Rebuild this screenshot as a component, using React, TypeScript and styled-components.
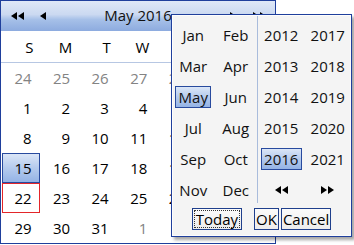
import React from "react";
import styled, { createGlobalStyle } from "styled-components";

const GlobalStyle = createGlobalStyle`
  html, body {
    margin: 0;
    padding: 0;
    background: #fff;
  }
  body {
    font-family: "Open Sans", "Noto Sans", sans-serif;
    font-size: 15px;
    color: #000;
  }
`;

const DAY_NAMES = ["S", "M", "T", "W", "T", "F", "S"];

type Day = { n: number; other?: boolean; selected?: boolean; today?: boolean };

const buildDays = (): Day[] => {
  const days: Day[] = [];
  [24, 25, 26, 27, 28, 29, 30].forEach((n) => days.push({ n, other: true }));
  for (let n = 1; n <= 31; n++) {
    days.push({ n, selected: n === 15, today: n === 22 });
  }
  for (let n = 1; n <= 4; n++) days.push({ n, other: true });
  return days;
};

const MONTHS = ["Jan", "Feb", "Mar", "Apr", "May", "Jun", "Jul", "Aug", "Sep", "Oct", "Nov", "Dec"];
const YEARS_LEFT = [2012, 2013, 2014, 2015, 2016];
const YEARS_RIGHT = [2017, 2018, 2019, 2020, 2021];

const Arrow = ({ dir, double }: { dir: "left" | "right"; double?: boolean }) => {
  const w = double ? 13 : 6;
  const tri = (x: number) =>
    dir === "left" ? `${x + 6},0 ${x + 6},8 ${x},4` : `${x},0 ${x},8 ${x + 6},4`;
  return (
    <svg width={w} height={8} viewBox={`0 0 ${w} 8`}>
      <polygon points={tri(0)} fill="#000" />
      {double && <polygon points={tri(7)} fill="#000" />}
    </svg>
  );
};

export default function App() {
  const days = buildDays();
  return (
    <>
      <GlobalStyle />
      <Stage>
        <Calendar>
          <Header>
            <NavButton>
              <Arrow dir="left" double />
            </NavButton>
            <NavButton $gap>
              <Arrow dir="left" />
            </NavButton>
            <Title>May 2016</Title>
            <NavButton>
              <Arrow dir="right" />
            </NavButton>
            <NavButton $gap>
              <Arrow dir="right" double />
            </NavButton>
          </Header>
          <DayNames>
            {DAY_NAMES.map((d, i) => (
              <DayName key={i}>{d}</DayName>
            ))}
          </DayNames>
          <DayGrid>
            {days.slice(0, 42).map((d, i) => (
              <DayCell key={i} $other={d.other} $selected={d.selected} $today={d.today}>
                {d.n}
              </DayCell>
            ))}
          </DayGrid>
        </Calendar>

        <Popup>
          <Panels>
            <PickGrid $width={85}>
              {MONTHS.map((m) => (
                <PickCell key={m}>
                  <PickItem $selected={m === "May"} $w={36}>
                    {m}
                  </PickItem>
                </PickCell>
              ))}
            </PickGrid>
            <Divider />
            <PickGrid $width={93}>
              {YEARS_LEFT.map((y, i) => (
                <React.Fragment key={y}>
                  <PickCell>
                    <PickItem $selected={y === 2016} $w={41}>
                      {y}
                    </PickItem>
                  </PickCell>
                  <PickCell>
                    <PickItem $w={41}>{YEARS_RIGHT[i]}</PickItem>
                  </PickCell>
                </React.Fragment>
              ))}
              <PickCell>
                <Arrow dir="left" double />
              </PickCell>
              <PickCell>
                <Arrow dir="right" double />
              </PickCell>
            </PickGrid>
          </Panels>
          <Footer>
            <FooterButton $after={12}>
              <FocusRect>Today</FocusRect>
            </FooterButton>
            <FooterButton $after={2}>OK</FooterButton>
            <FooterButton>Cancel</FooterButton>
          </Footer>
        </Popup>
      </Stage>
    </>
  );
}

const Stage = styled.div`
  position: relative;
  width: 354px;
  height: 245px;
  overflow: hidden;
`;

const Calendar = styled.div`
  width: 276px;
  height: 244px;
  box-sizing: border-box;
  border: 1px solid #1f3f9c;
  background: #fff;
  display: flex;
  flex-direction: column;
`;

const Header = styled.div`
  height: 30px;
  display: flex;
  align-items: center;
  padding: 0 8px;
  background: linear-gradient(
    to bottom,
    #dfe8f7 0%,
    #cbd9f1 45%,
    #a6c0e8 62%,
    #8dabdf 100%
  );
  border-bottom: 1px solid #fff;
`;

const NavButton = styled.div<{ $gap?: boolean }>`
  width: 16px;
  height: 16px;
  display: flex;
  align-items: center;
  justify-content: center;
  margin-left: ${(p) => (p.$gap ? "10px" : "0")};
  margin-right: ${(p) => (p.$gap ? "0" : "0")};
  &:nth-child(2) {
    margin-left: 10px;
  }
  &:nth-child(4) {
    margin-left: 0;
    margin-right: 10px;
  }
  &:nth-child(5) {
    margin-left: 0;
  }
`;

const Title = styled.div`
  flex: 1;
  text-align: center;
  font-size: 15px;
  line-height: 20px;
  color: #111;
  padding-bottom: 2px;
`;

const DayNames = styled.div`
  height: 30px;
  display: grid;
  grid-template-columns: repeat(7, 1fr);
  padding: 0 2px;
  align-items: center;
  border-bottom: 1px solid #b7c7e3;
`;

const DayName = styled.div`
  text-align: right;
  padding-right: 8px;
`;

const DayGrid = styled.div`
  flex: 1;
  display: grid;
  grid-template-columns: repeat(7, 1fr);
  grid-auto-rows: 30px;
  padding: 0 2px;
`;

const DayCell = styled.div<{ $other?: boolean; $selected?: boolean; $today?: boolean }>`
  box-sizing: border-box;
  display: flex;
  align-items: center;
  justify-content: flex-end;
  padding-right: 7px;
  color: ${(p) => (p.$other ? "#838383" : "#000")};
  border: 1px solid
    ${(p) => (p.$selected ? "#284a9e" : p.$today ? "#e3262a" : "transparent")};
  margin: 0 2px 0 -1px;
  background: ${(p) =>
    p.$selected ? "linear-gradient(to bottom, #dbe6f7 0%, #b4caed 50%, #94b3e5 100%)" : "transparent"};
`;

const Popup = styled.div`
  position: absolute;
  left: 171px;
  top: 14px;
  width: 181px;
  height: 223px;
  box-sizing: border-box;
  border: 1px solid #1f3f9c;
  background: #f4f4f4;
  box-shadow: 3px 3px 3px rgba(0, 0, 0, 0.35), inset 0 0 0 1px #fdfdfd;
  display: flex;
  flex-direction: column;
`;

const Panels = styled.div`
  display: flex;
  margin-top: 1px;
`;

const PickGrid = styled.div<{ $width: number }>`
  width: ${(p) => p.$width}px;
  display: grid;
  grid-template-columns: 1fr 1fr;
  grid-auto-rows: 31px;
  padding-top: 3px;
`;

const Divider = styled.div`
  width: 1px;
  height: 187px;
  background: #a9bcdc;
`;

const PickCell = styled.div`
  display: flex;
  align-items: center;
  justify-content: center;
`;

const PickItem = styled.div<{ $selected?: boolean; $w: number }>`
  box-sizing: border-box;
  min-width: ${(p) => p.$w}px;
  height: 22px;
  display: flex;
  align-items: center;
  justify-content: center;
  color: #111;
  border: 1px solid ${(p) => (p.$selected ? "#284a9e" : "transparent")};
  background: ${(p) =>
    p.$selected ? "linear-gradient(to bottom, #dbe6f7 0%, #b4caed 50%, #94b3e5 100%)" : "transparent"};
`;

const Footer = styled.div`
  display: flex;
  justify-content: center;
  padding-top: 3px;
`;

const FooterButton = styled.div<{ $after?: number }>`
  box-sizing: border-box;
  height: 22px;
  padding: 0 1px;
  display: flex;
  align-items: center;
  border: 1px solid #1f3f8c;
  background: linear-gradient(to bottom, #fbfbfb, #ececec);
  margin-right: ${(p) => p.$after ?? 0}px;
  color: #000;
`;

const FocusRect = styled.span`
  border: 1px dotted #333;
  line-height: 16px;
  padding: 0 1px;
`;
